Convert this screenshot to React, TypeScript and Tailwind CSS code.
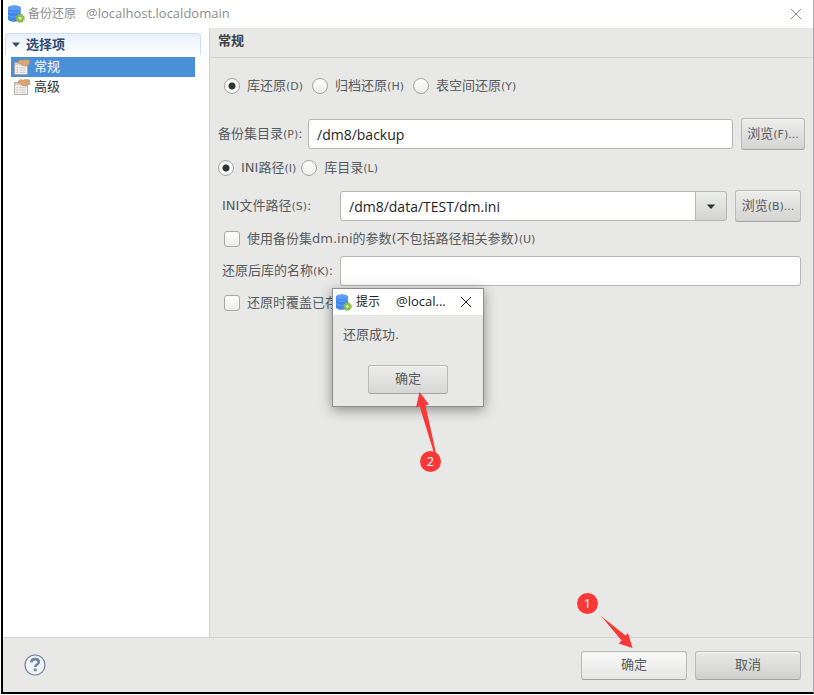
import { useState } from 'react';
import type { ReactNode } from 'react';

const RESTORE_TYPES = [
  { id: 'db', label: '库还原', hotkey: 'D' },
  { id: 'archive', label: '归档还原', hotkey: 'H' },
  { id: 'tablespace', label: '表空间还原', hotkey: 'Y' },
];

const PATH_TYPES = [
  { id: 'ini', label: 'INI路径', hotkey: 'I' },
  { id: 'dir', label: '库目录', hotkey: 'L' },
];

const SECTIONS = [
  { id: 'general', label: '常规' },
  { id: 'advanced', label: '高级' },
];

function DatabaseIcon({ className }: { className?: string }) {
  return (
    <svg className={className} viewBox="0 0 18 18" fill="none" aria-hidden="true">
      <path d="M1 3C1 1.500 3.800.5 7.300.5S13.700 1.500 13.700 3v11c0 1.600-2.900 2.700-6.400 2.700S1 15.600 1 14z" fill="#3f86ea" />
      <ellipse cx="7.350" cy="3.200" rx="6.300" ry="2.600" fill="#5b9df8" />
      <path d="M1 5.300c.8 1.600 3.400 2.300 6.300 2.300s5.500-.7 6.400-2.300M1 9.800c.8 1.600 3.400 2.300 6.300 2.300s5.500-.7 6.400-2.300" stroke="#6fa8f6" strokeWidth=".9" />
      <circle cx="13.200" cy="13.200" r="3.700" fill="#8fc63d" />
      <circle cx="13.200" cy="13.200" r="4" stroke="#84b53a" strokeWidth="1.200" strokeDasharray="2.100 1.040" />
      <circle cx="13.200" cy="13.200" r="1.700" fill="#fff" stroke="#6f9f33" strokeWidth=".6" />
    </svg>
  );
}

function PropertiesIcon() {
  return (
    <svg className="h-4 w-4 shrink-0" viewBox="0 0 16 16" fill="none" aria-hidden="true">
      <path d="M.6 3.500h13v12H.6z" fill="#f6f3ee" stroke="#aaa399" strokeWidth=".9" />
      <path d="M1 4h12.200v2.500H1z" fill="#d9d2c8" />
      <path d="M2.500 8.700H4M2.500 11H4M2.500 13.300H4" stroke="#b99c88" strokeWidth=".9" />
      <path d="M5.300 8.700h6.200M5.300 11h6.200M5.300 13.300h6.200" stroke="#bcc3cb" strokeWidth=".9" />
      <path d="M4.200 2.200 6.500.7l2.300.6L11.500.5l4.200.5v4.200l-2.400.5-1.500 1.900-1.400-1.500-2 .7-.9-1.700-3.300-1z" fill="#d9a573" stroke="#b98452" strokeWidth=".6" />
    </svg>
  );
}

function CloseIcon() {
  return (
    <svg className="h-2.5 w-2.5" viewBox="0 0 10 10" fill="none" stroke="currentColor" aria-hidden="true">
      <path d="M0 0l10 10M10 0L0 10" />
    </svg>
  );
}

function Caret({ className }: { className: string }) {
  return (
    <svg className={className} viewBox="0 0 10 6" fill="currentColor" aria-hidden="true">
      <path d="M0 .5h10L5 6z" />
    </svg>
  );
}

function Button({ children, className = '', onClick }: { children: ReactNode; className?: string; onClick?: () => void }) {
  return (
    <button
      type="button"
      onClick={onClick}
      className={`shrink-0 rounded-[3px] border border-[#b9b9b7] border-b-[#a2a2a0] bg-linear-to-b text-[13px] text-[#565b5d] shadow-[inset_0_1px_0_#f4f4f3] ${className}`}
    >
      {children}
    </button>
  );
}

function Hotkey({ value }: { value: string }) {
  return <span className="text-[11px]">({value})</span>;
}

type RadioProps = { name: string; label: string; hotkey: string; checked: boolean; onChange: () => void };

function Radio({ name, label, hotkey, checked, onChange }: RadioProps) {
  return (
    <label className="flex items-center gap-[7px] whitespace-nowrap">
      <input
        type="radio"
        name={name}
        checked={checked}
        onChange={onChange}
        className="h-4 w-4 shrink-0 appearance-none rounded-full border border-[#a5a5a3] bg-linear-to-b from-white to-[#ececeb] checked:bg-[radial-gradient(circle,#2e3436_3px,#fafafa_4px)]"
      />
      <span>{label}<Hotkey value={hotkey} /></span>
    </label>
  );
}

function Checkbox({ children }: { children: ReactNode }) {
  return (
    <label className="flex h-[34px] items-center gap-[7px] pl-0.5 whitespace-nowrap">
      <input
        type="checkbox"
        className="h-4 w-4 shrink-0 appearance-none rounded-[3px] border border-[#a9a9a7] bg-linear-to-b from-white to-[#ececeb] checked:bg-[#4a90d9]"
      />
      <span>{children}</span>
    </label>
  );
}

const FIELD = 'min-w-0 flex-1 border border-[#b6b6b4] bg-white px-2 font-["Open_Sans","Noto_Sans_CJK_SC",sans-serif] text-[14px] text-[#1f2324] outline-none';

export default function App() {
  const [section, setSection] = useState('general');
  const [restoreType, setRestoreType] = useState('db');
  const [pathType, setPathType] = useState('ini');
  const [tipOpen, setTipOpen] = useState(true);

  return (
    <div className='relative flex h-screen flex-col bg-white pb-px pl-px font-["DejaVu_Sans","Noto_Sans_CJK_SC",sans-serif] text-[13px] text-[#565b5d]'>
      <div className="flex min-h-0 flex-1 flex-col border-r border-b-2 border-l-2 border-r-[#a9abb0] border-b-black border-l-black bg-[#e8e8e7]">
        <header className='flex h-7 shrink-0 items-center bg-white pr-3 pl-1 font-["Open_Sans","Noto_Sans_CJK_SC",sans-serif] text-[#8d8d8d]'>
          <DatabaseIcon className="mr-[3px] h-[18px] w-[18px]" />
          <h1 className="text-[12px]">备份还原</h1>
          <span className="ml-2.5">@localhost.localdomain</span>
          <button type="button" aria-label="关闭" className="ml-auto text-[#8d8d8d]">
            <CloseIcon />
          </button>
        </header>

        <div className="flex min-h-0 flex-1">
          <nav className="w-[207px] shrink-0 border-r border-[#d4d4d3] bg-white pt-[5px] pr-2 pl-0.5">
            <h2 className="flex h-[22px] items-center gap-1.5 rounded-t-[4px] border-x border-t border-[#cfe0f3] bg-linear-to-b from-[#e6f0fb] to-white pl-1.5 font-bold text-[#2c4a6e]">
              <Caret className="h-[5px] w-2" />
              选择项
            </h2>
            <ul className="mt-0.5 pr-1.5 pl-1.5">
              {SECTIONS.map((s) => (
                <li key={s.id}>
                  <button
                    type="button"
                    onClick={() => setSection(s.id)}
                    className={`flex h-5 w-full items-center gap-1 pl-[3px] ${
                      section === s.id ? 'bg-[#4a90d9] text-white' : 'text-[#2e3436]'
                    }`}
                  >
                    <PropertiesIcon />
                    {s.label}
                  </button>
                </li>
              ))}
            </ul>
          </nav>

          <main className="min-w-0 flex-1">
            <h2 className="flex h-[30px] items-center border-b border-[#d2d2d1] pb-1 pl-2 font-bold text-[#3c4143]">常规</h2>

            <div className="pr-2 pl-2">
              <fieldset className="mt-4 flex h-6 items-center gap-[9px] pl-1.5">
                {RESTORE_TYPES.map((t) => (
                  <Radio
                    key={t.id}
                    name="restoreType"
                    label={t.label}
                    hotkey={t.hotkey}
                    checked={restoreType === t.id}
                    onChange={() => setRestoreType(t.id)}
                  />
                ))}
              </fieldset>

              <div className="mt-5 flex items-center">
                <label htmlFor="backupDir" className="w-[90px] shrink-0 whitespace-nowrap">
                  备份集目录<Hotkey value="P" />:
                </label>
                <input id="backupDir" defaultValue="/dm8/backup" className={`h-[30px] rounded-[3px] ${FIELD}`} />
                <Button className="ml-2 h-8 w-16 from-[#ededec] to-[#d4d4d3]">浏览<Hotkey value="F" /><span className="text-[11px]">...</span></Button>
              </div>

              <fieldset className="mt-1.5 flex h-6 items-center gap-[5px]">
                {PATH_TYPES.map((t) => (
                  <Radio
                    key={t.id}
                    name="pathType"
                    label={t.label}
                    hotkey={t.hotkey}
                    checked={pathType === t.id}
                    onChange={() => setPathType(t.id)}
                  />
                ))}
              </fieldset>

              <div className="mt-2.5 pr-1 pl-1">
                <div className="flex items-center">
                  <label htmlFor="iniPath" className="w-[118px] shrink-0 whitespace-nowrap">
                    INI文件路径<Hotkey value="S" />:
                  </label>
                  <div className="flex min-w-0 flex-1">
                    <input id="iniPath" defaultValue="/dm8/data/TEST/dm.ini" className={`h-[30px] rounded-l-[3px] ${FIELD}`} />
                    <button
                      type="button"
                      aria-label="INI文件路径"
                      className="-ml-px flex w-8 items-center justify-center rounded-r-[3px] border border-[#b6b6b4] bg-linear-to-b from-[#ededec] to-[#d4d4d3] text-[#2e3436]"
                    >
                      <Caret className="h-[5px] w-2.5" />
                    </button>
                  </div>
                  <Button className="ml-2 h-8 w-[66px] from-[#ededec] to-[#d4d4d3]">浏览<Hotkey value="B" /><span className="text-[11px]">...</span></Button>
                </div>

                <Checkbox>使用备份集dm.ini的参数(不包括路径相关参数)<Hotkey value="U" /></Checkbox>

                <div className="flex items-center">
                  <label htmlFor="dbName" className="w-[118px] shrink-0 whitespace-nowrap">
                    还原后库的名称<Hotkey value="K" />:
                  </label>
                  <input id="dbName" className={`h-[30px] rounded-[3px] ${FIELD}`} />
                </div>

                <Checkbox>还原时覆盖已存</Checkbox>
              </div>
            </div>
          </main>
        </div>

        <footer className="flex h-[55px] shrink-0 items-center gap-2 border-t border-[#d2d2d1] pr-3 pl-5">
          <button type="button" aria-label="帮助" className="mr-auto">
            <svg className="h-6 w-6" viewBox="0 0 24 24" fill="none" stroke="#6f83a3" aria-hidden="true">
              <circle cx="12" cy="12" r="10" fill="#f0f2f4" strokeWidth="1.200" />
              <path d="M8.300 9.300c.2-2 1.700-3.200 3.800-3.200s3.700 1.100 3.700 2.900c0 2.500-3.500 2.500-3.500 5" strokeWidth="2.600" />
              <path d="M12.200 15.600v2.600" strokeWidth="2.800" />
            </svg>
          </button>
          <Button className="h-[29px] w-[106px] from-[#f9f9f9] to-[#e6e6e5]">确定</Button>
          <Button className="h-[29px] w-[106px] from-[#e9e9e8] to-[#d0d0cf]">取消</Button>
        </footer>
      </div>

      {tipOpen && (
        <div
          role="dialog"
          aria-label="提示"
          className="absolute top-[288px] left-[332px] w-[152px] border border-[#8b8d8e] bg-[#e8e8e7] pb-3 shadow-[0_3px_12px_rgba(0,0,0,0.4)]"
        >
          <div className='flex h-[26px] items-center bg-white pr-3 pl-0.5 font-["Open_Sans","Noto_Sans_CJK_SC",sans-serif] text-[13px] text-[#1c1c1c]'>
            <DatabaseIcon className="mr-1 h-[17px] w-[17px]" />
            <span className="text-[12px]">提示</span>
            <span className="ml-4">@local...</span>
            <button type="button" aria-label="关闭" className="ml-auto" onClick={() => setTipOpen(false)}>
              <CloseIcon />
            </button>
          </div>
          <p className="mt-2.5 pl-2.5">还原成功.</p>
          <div className="mt-5 flex justify-center">
            <Button className="h-[29px] w-20 from-[#ededec] to-[#d6d6d5]" onClick={() => setTipOpen(false)}>确定</Button>
          </div>
        </div>
      )}

      {/* step markers */}
      <svg className="pointer-events-none absolute top-[392px] left-[414px] h-[62px] w-6" viewBox="0 0 24 62" fill="#fb3838" aria-hidden="true">
        <path d="M5.500 0l9.500 12.500-3.500 1L22 61h-2L5.500 14l-3.500 1.500z" />
      </svg>
      <span className='absolute top-[451px] left-[420px] flex h-[21px] w-[21px] items-center justify-center rounded-full bg-[#fb3838] font-["Noto_Sans",sans-serif] text-[12px] text-white'>2</span>
      <svg className="pointer-events-none absolute top-[616px] left-[601px] h-8 w-8" viewBox="0 0 32 32" fill="#fb3838" aria-hidden="true">
        <path d="M0 0l24.500 19.500 2.500-2.500L31.500 32l-14-4.500 3-3z" />
      </svg>
      <span className='absolute top-[593px] left-[577px] flex h-[21px] w-[21px] items-center justify-center rounded-full bg-[#fb3838] font-["Noto_Sans",sans-serif] text-[12px] text-white'>1</span>
    </div>
  );
}
